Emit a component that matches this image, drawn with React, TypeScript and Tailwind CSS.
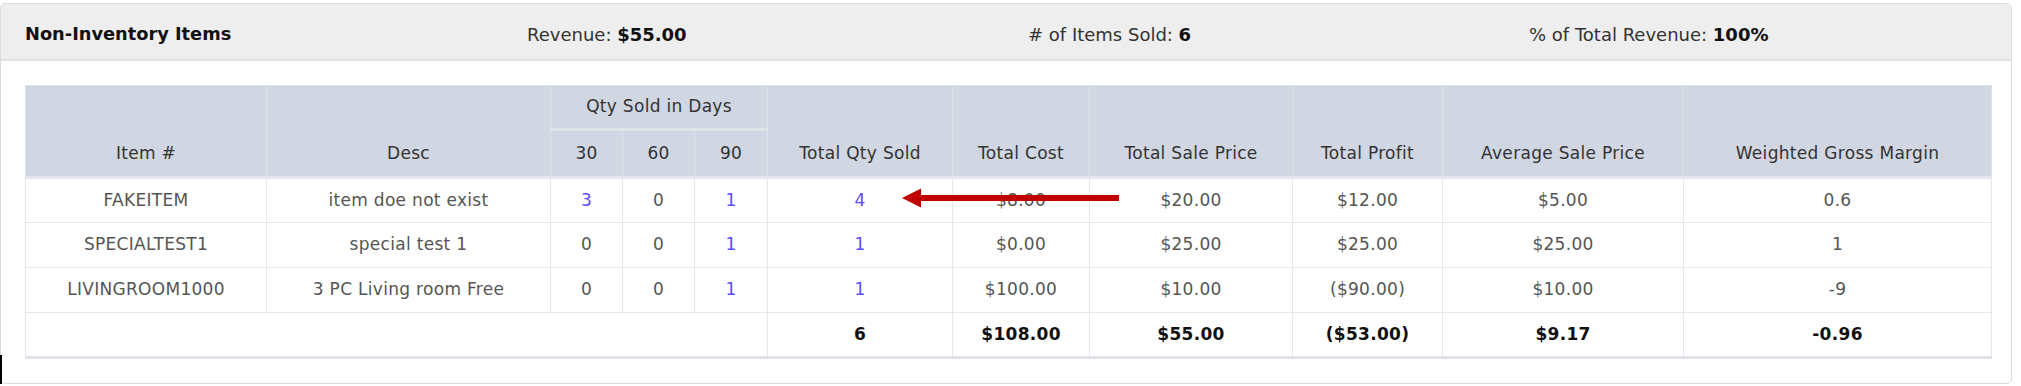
import React from "react";

const rows = [
  { item: "FAKEITEM", desc: "item doe not exist", d30: "3", d60: "0", d90: "1", qty: "4", cost: "$8.00", sale: "$20.00", profit: "$12.00", avg: "$5.00", wgm: "0.6", l30: true },
  { item: "SPECIALTEST1", desc: "special test 1", d30: "0", d60: "0", d90: "1", qty: "1", cost: "$0.00", sale: "$25.00", profit: "$25.00", avg: "$25.00", wgm: "1", l30: false },
  { item: "LIVINGROOM1000", desc: "3 PC Living room Free", d30: "0", d60: "0", d90: "1", qty: "1", cost: "$100.00", sale: "$10.00", profit: "($90.00)", avg: "$10.00", wgm: "-9", l30: false },
];

const th = "border border-[#dde1e8] font-normal text-[#333] text-center";
const td = "border border-[#e5e7eb] text-center h-[45px] p-0";
const link = "text-[#5b4ef7]";

export default function App() {
  return (
    <div className="relative bg-white pt-[3px] pr-[9px] font-['DejaVu_Sans',sans-serif] text-[17px] tracking-[0.3px]">
      <div className="border border-[#dcdcdc] rounded-[5px] overflow-hidden bg-white">
        <div className="h-[57px] bg-[#eeeeee] border-b-2 border-[#e2e2e2] grid grid-cols-[502px_501px_501px_1fr] items-center pl-6 pt-[5px] text-[18px] text-[#333] tracking-normal">
          <div className="font-bold text-[#111] text-[17.8px]">Non-Inventory Items</div>
          <div>
            Revenue: <span className="font-bold text-[#111]">$55.00</span>
          </div>
          <div>
            # of Items Sold: <span className="font-bold text-[#111]">6</span>
          </div>
          <div>
            % of Total Revenue: <span className="font-bold text-[#111]">100%</span>
          </div>
        </div>

        <div className="relative pt-6 pb-6 pl-6 pr-[19px]">
          <table className="w-full border-collapse table-fixed">
            <colgroup>
              <col className="w-[241px]" />
              <col className="w-[284px]" />
              <col className="w-[72px]" />
              <col className="w-[72px]" />
              <col className="w-[73px]" />
              <col className="w-[185px]" />
              <col className="w-[137px]" />
              <col className="w-[203px]" />
              <col className="w-[150px]" />
              <col className="w-[241px]" />
              <col />
            </colgroup>
            <thead className="bg-[#d0d6e2] border-b-[3px] border-[#e3e6ec]">
              <tr className="h-[44px]">
                <th rowSpan={2} className={`${th} align-bottom pb-[10px]`}>Item #</th>
                <th rowSpan={2} className={`${th} align-bottom pb-[10px]`}>Desc</th>
                <th colSpan={3} className={`${th} border-b-[3px] border-b-[#dfe3ea]`}>Qty Sold in Days</th>
                <th rowSpan={2} className={`${th} align-bottom pb-[10px]`}>Total Qty Sold</th>
                <th rowSpan={2} className={`${th} align-bottom pb-[10px]`}>Total Cost</th>
                <th rowSpan={2} className={`${th} align-bottom pb-[10px]`}>Total Sale Price</th>
                <th rowSpan={2} className={`${th} align-bottom pb-[10px]`}>Total Profit</th>
                <th rowSpan={2} className={`${th} align-bottom pb-[10px]`}>Average Sale Price</th>
                <th rowSpan={2} className={`${th} align-bottom pb-[10px]`}>Weighted Gross Margin</th>
              </tr>
              <tr className="h-[48px]">
                <th className={th}>30</th>
                <th className={th}>60</th>
                <th className={th}>90</th>
              </tr>
            </thead>
            <tbody className="text-[#555] border-b-[3px] border-[#dfe3e8]">
              {rows.map((r) => (
                <tr key={r.item}>
                  <td className={td}>{r.item}</td>
                  <td className={td}>{r.desc}</td>
                  <td className={`${td} ${r.l30 ? link : ""}`}>{r.d30}</td>
                  <td className={td}>{r.d60}</td>
                  <td className={`${td} ${link}`}>{r.d90}</td>
                  <td className={`${td} ${link}`}>{r.qty}</td>
                  <td className={td}>{r.cost}</td>
                  <td className={td}>{r.sale}</td>
                  <td className={td}>{r.profit}</td>
                  <td className={td}>{r.avg}</td>
                  <td className={td}>{r.wgm}</td>
                </tr>
              ))}
              <tr className="font-bold text-[#111]">
                <td colSpan={5} className={td}></td>
                <td className={td}>6</td>
                <td className={td}>$108.00</td>
                <td className={td}>$55.00</td>
                <td className={td}>($53.00)</td>
                <td className={td}>$9.17</td>
                <td className={td}>-0.96</td>
              </tr>
            </tbody>
          </table>

          <svg
            className="absolute left-[901px] top-[127px]"
            width="217"
            height="20"
            viewBox="0 0 217 20"
          >
            <polygon points="0,10 19,0.5 19,19.5" fill="#c00000" />
            <rect x="17" y="7" width="200" height="6" fill="#c00000" />
          </svg>
        </div>
      </div>
      <div className="absolute left-0 top-[355px] w-[2px] h-[31px] bg-black" />
    </div>
  );
}
